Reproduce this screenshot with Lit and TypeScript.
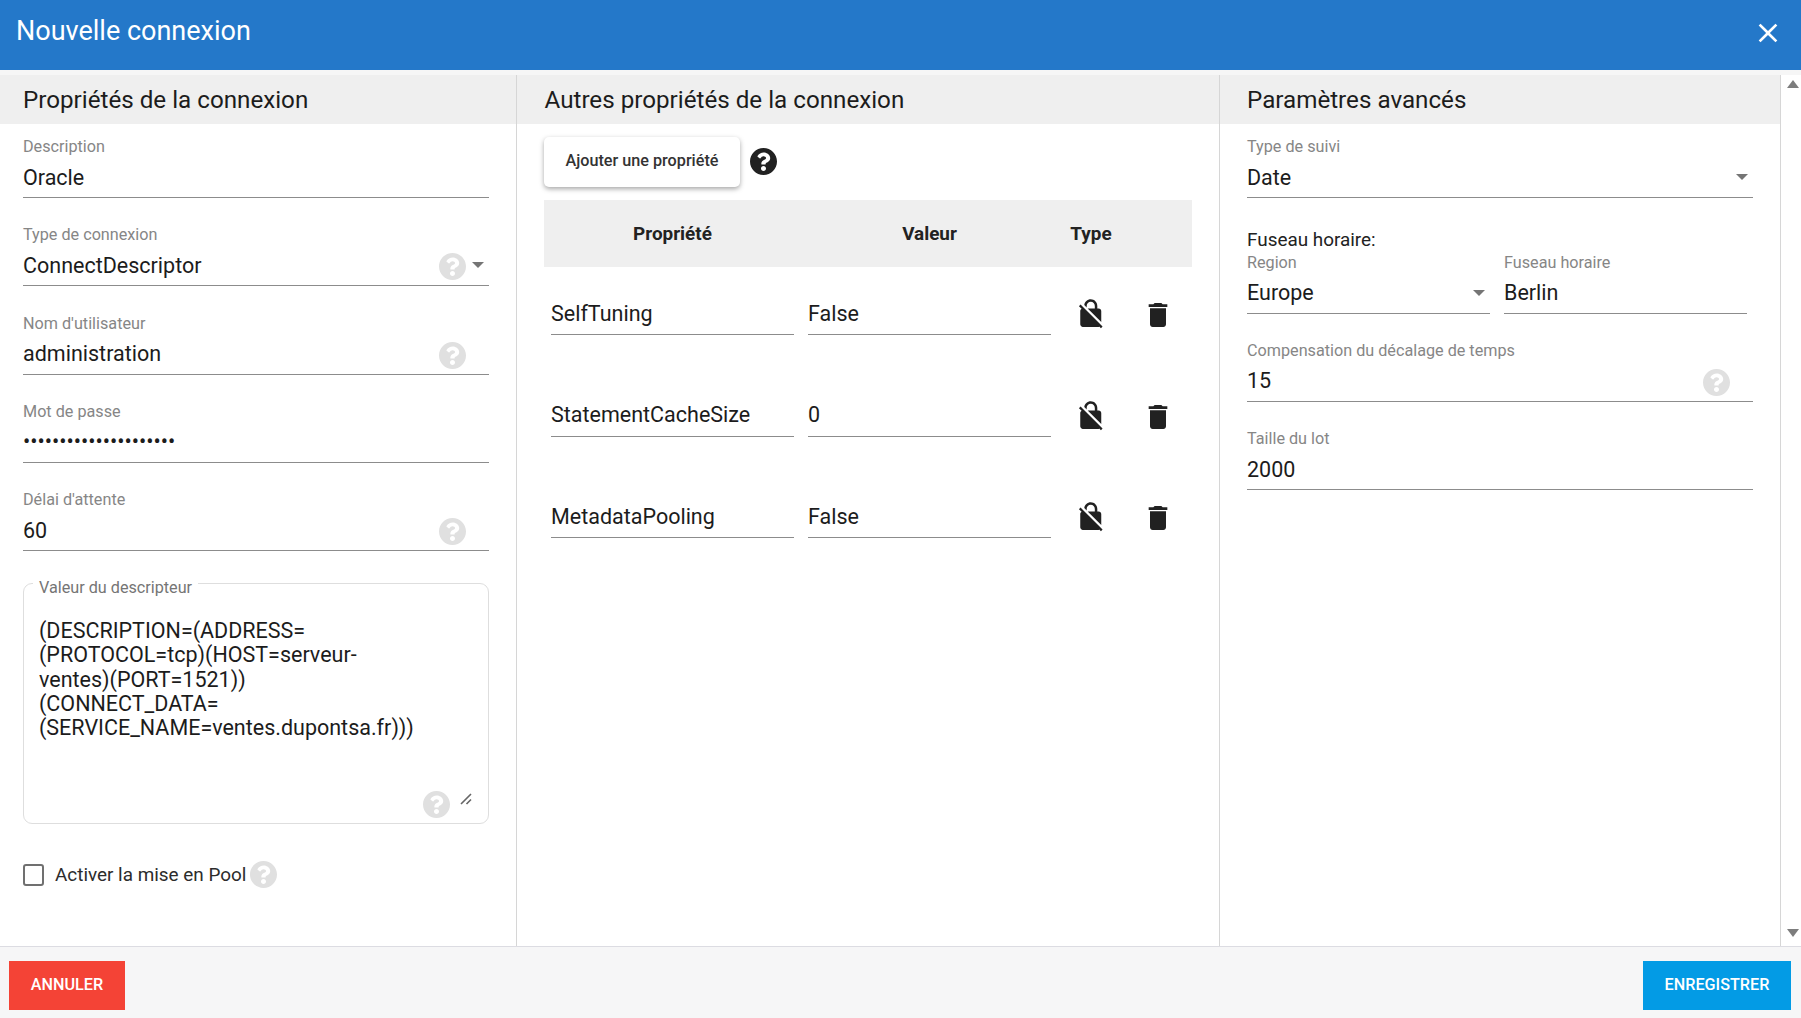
import { LitElement, html, css, svg, nothing } from 'lit';
import { customElement } from 'lit/decorators.js';

interface FieldOpts {
  help?: boolean;
  caret?: boolean;
  type?: string;
  cls?: string;
}

interface PropRow {
  name: string;
  value: string;
}

const ROWS: PropRow[] = [
  { name: 'SelfTuning', value: 'False' },
  { name: 'StatementCacheSize', value: '0' },
  { name: 'MetadataPooling', value: 'False' },
];

const DESCRIPTOR = [
  '(DESCRIPTION=(ADDRESS=',
  '(PROTOCOL=tcp)(HOST=serveur-',
  'ventes)(PORT=1521))',
  '(CONNECT_DATA=',
  '(SERVICE_NAME=ventes.dupontsa.fr)))',
];

const HELP_PATH =
  'M504 256c0 136.997-111.043 248-248 248S8 392.997 8 256C8 119.083 119.043 8 256 8s248 111.083 248 248zM262.655 90c-54.497 0-89.255 22.957-116.549 63.758-3.536 5.286-2.353 12.415 2.715 16.258l34.699 26.31c5.205 3.947 12.621 3.008 16.665-2.122 17.864-22.658 30.113-35.797 57.303-35.797 20.429 0 45.698 13.148 45.698 32.958 0 14.976-12.363 22.667-32.534 33.976C247.128 238.528 216 254.941 216 296v4c0 6.627 5.373 12 12 12h56c6.627 0 12-5.373 12-12v-1.333c0-28.462 83.186-29.647 83.186-106.667 0-58.002-60.165-102-116.531-102zM256 338c-25.365 0-46 20.635-46 46 0 25.364 20.635 46 46 46s46-20.636 46-46c0-25.365-20.635-46-46-46z';

const helpIcon = (cls = 'help') => html`<svg class=${cls} viewBox="8 8 496 496" aria-hidden="true">
  ${svg`<path d=${HELP_PATH}></path>`}
</svg>`;

const caretIcon = () => html`<svg class="caret" viewBox="0 0 12 6" aria-hidden="true"><polygon points="0,0 12,0 6,6"></polygon></svg>`;

const field = (label: string, value: string, opts: FieldOpts = {}) => html`
  <div class="field ${opts.cls ?? ''}">
    <div class="field__label">${label}</div>
    <div class="field__body">
      <input class="field__input" type=${opts.type ?? 'text'} .value=${value} />
      ${opts.help ? helpIcon() : nothing}
      ${opts.help || opts.caret ? html`<span class="caret-slot">${opts.caret ? caretIcon() : nothing}</span>` : nothing}
    </div>
  </div>
`;

@customElement('app-root')
export class AppRoot extends LitElement {
  static styles = css`
    :host {
      display: flex;
      flex-direction: column;
      height: 100vh;
      overflow: hidden;
      background: #fff;
      color: #1c1c1c;
      font-family: Roboto, 'Liberation Sans', sans-serif;
    }
    .topbar {
      flex: none;
      height: 70px;
      box-sizing: border-box;
      display: flex;
      justify-content: space-between;
      align-items: flex-start;
      padding: 0 17px 0 16px;
      background: #2478c9;
      color: #fff;
    }
    .topbar__title {
      font-size: 27px;
      line-height: 62px;
    }
    .topbar__close {
      width: 32px;
      height: 32px;
      margin-top: 17px;
      fill: #fff;
    }
    .strip {
      flex: none;
      height: 5px;
      background: #f6f6f6;
    }
    .main {
      flex: 1;
      min-height: 0;
      display: flex;
    }
    .col {
      box-sizing: border-box;
      border-right: 1px solid #d6d6d6;
    }
    .col--left {
      width: 517px;
    }
    .col--mid {
      width: 703px;
    }
    .col--right {
      width: 561px;
    }
    .col__head {
      height: 49px;
      box-sizing: border-box;
      padding-top: 1px;
      background: #efefef;
      font-size: 24.2px;
      line-height: 49px;
    }
    .col--left .col__head {
      padding-left: 23px;
    }
    .col--mid .col__head {
      padding-left: 27.5px;
    }
    .col--right .col__head {
      padding-left: 27px;
    }
    .col__body {
      padding: 13px 27px 0;
    }
    .col--left .col__body {
      padding-left: 23px;
    }
    .field {
      margin-bottom: 27.25px;
    }
    .field__label {
      height: 20px;
      font-size: 16.2px;
      line-height: 20px;
      color: #868686;
      white-space: nowrap;
    }
    .field__body {
      height: 40px;
      display: flex;
      align-items: center;
      border-bottom: 1px solid #8c8c8c;
    }
    .field__input {
      flex: 1;
      min-width: 0;
      height: 100%;
      padding: 0;
      border: 0;
      outline: 0;
      background: transparent;
      color: #1c1c1c;
      font: inherit;
      font-size: 21.5px;
    }
    .help {
      flex: none;
      width: 27px;
      height: 27px;
      fill: #e0e0e0;
      margin-top: 3px;
    }
    .caret-slot {
      flex: none;
      width: 23px;
      display: flex;
      justify-content: flex-end;
      padding-right: 5px;
      box-sizing: border-box;
    }
    .caret {
      display: block;
      width: 12px;
      height: 6px;
      fill: #757575;
    }
    .outlined {
      position: relative;
      box-sizing: border-box;
      height: 241px;
      margin-top: 32px;
      padding: 35px 14px 0 15px;
      border: 1.5px solid #dedede;
      border-radius: 9px;
      font-size: 21.5px;
      line-height: 24.3px;
    }
    .outlined__legend {
      position: absolute;
      top: -6px;
      left: 9px;
      padding: 0 6px;
      background: #fff;
      font-size: 16.2px;
      line-height: 20px;
      color: #757575;
      white-space: nowrap;
    }
    .outlined .help {
      position: absolute;
      right: 38px;
      bottom: 5px;
      margin: 0;
    }
    .outlined__grip {
      position: absolute;
      right: 16px;
      bottom: 18px;
      width: 12px;
      height: 12px;
      stroke: #666;
      stroke-width: 1.6;
      fill: none;
    }
    .pool {
      display: flex;
      align-items: center;
      margin-top: 37px;
      font-size: 18.9px;
      color: #2c2c2c;
    }
    .pool__box {
      flex: none;
      width: 21px;
      height: 22px;
      box-sizing: border-box;
      border: 2.4px solid #707070;
      border-radius: 3px;
      margin-right: 11px;
    }
    .pool .help {
      margin: 0 0 0 4px;
    }
    .add-row {
      display: flex;
      align-items: center;
      gap: 10px;
    }
    .add-btn {
      width: 196px;
      height: 50px;
      padding: 0 0 3px;
      border: 0;
      border-radius: 5px;
      background: #fff;
      box-shadow: 0 2px 5px rgba(0, 0, 0, 0.35);
      color: #333;
      font: inherit;
      font-size: 16.2px;
      font-weight: 500;
    }
    .add-row .help {
      fill: #212121;
      margin: -1px 0 0;
    }
    .props {
      display: grid;
      grid-template-columns: 257px 257px 66px 68px;
      margin-top: 13px;
    }
    .props__head {
      height: 67px;
      background: #efefef;
      font-size: 18.9px;
      font-weight: 700;
      line-height: 67px;
      text-align: center;
      color: #222;
    }
    .props__cell {
      height: 101.6px;
      box-sizing: border-box;
      padding: 25px 7px 0;
    }
    .props__input {
      display: block;
      box-sizing: border-box;
      width: 100%;
      height: 43px;
      padding: 0;
      border: 0;
      border-bottom: 1px solid #8c8c8c;
      outline: 0;
      background: transparent;
      color: #1c1c1c;
      font: inherit;
      font-size: 21.5px;
    }
    .props__icon {
      height: 101.6px;
      box-sizing: border-box;
      padding-top: 32px;
      display: flex;
      justify-content: center;
      align-items: flex-start;
    }
    .props__icon svg {
      display: block;
      fill: #212121;
    }
    .icon-lock {
      width: 31.5px;
      height: 31.5px;
      margin-top: -1px;
    }
    .icon-trash {
      width: 32px;
      height: 32px;
    }
    .zone__title {
      font-size: 18.9px;
      line-height: 22px;
      color: #222;
      margin: 30.5px 0 2px;
    }
    .zone__row {
      display: grid;
      grid-template-columns: 243px 243px;
      column-gap: 14px;
    }
    .scrollbar {
      flex: 1;
      display: flex;
      flex-direction: column;
      justify-content: space-between;
      align-items: center;
      padding: 5px 0 9px 3px;
    }
    .scrollbar svg {
      display: block;
      width: 12px;
      height: 8px;
      fill: #7d7d7d;
    }
    .footer {
      flex: none;
      height: 72px;
      box-sizing: border-box;
      display: flex;
      justify-content: space-between;
      padding: 14px 10px 0 9px;
      border-top: 1px solid #dcdce2;
      background: #f6f6f7;
    }
    .footer__btn {
      height: 49px;
      padding: 0 0 2px;
      border: 0;
      color: #fff;
      font: inherit;
      font-size: 16.2px;
      font-weight: 500;
    }
    .footer__btn--cancel {
      width: 116px;
      background: #f44336;
    }
    .footer__btn--save {
      width: 148px;
      background: #039be5;
    }
  `;

  private renderRow(row: PropRow) {
    return html`
      <div class="props__cell"><input class="props__input" .value=${row.name} /></div>
      <div class="props__cell"><input class="props__input" .value=${row.value} /></div>
      <div class="props__icon">
        <svg class="icon-lock" viewBox="0 0 24 24" aria-hidden="true">
          <path d="M21 21.78L4.22 5 3 6.22l2.04 2.04C4.42 8.6 4 9.25 4 10v10c0 1.1.9 2 2 2h12c.23 0 .45-.05.66-.12L19.78 23 21 21.78zM8.9 6c0-1.71 1.39-3.1 3.1-3.1s3.1 1.39 3.1 3.1v2H9.66L20 18.34V10c0-1.1-.9-2-2-2h-1V6c0-2.76-2.24-5-5-5-2.56 0-4.64 1.93-4.94 4.4L8.9 7.24V6z"></path>
        </svg>
      </div>
      <div class="props__icon">
        <svg class="icon-trash" viewBox="0 0 24 24" aria-hidden="true">
          <path d="M6 19c0 1.1.9 2 2 2h8c1.1 0 2-.9 2-2V7H6v12zM19 4h-3.5l-1-1h-5l-1 1H5v2h14V4z"></path>
        </svg>
      </div>
    `;
  }

  render() {
    return html`
      <div class="topbar">
        <div class="topbar__title">Nouvelle connexion</div>
        <svg class="topbar__close" viewBox="0 0 24 24" aria-hidden="true">
          <path d="M19 6.41L17.59 5 12 10.59 6.41 5 5 6.41 10.59 12 5 17.59 6.41 19 12 13.41 17.59 19 19 17.59 13.41 12z"></path>
        </svg>
      </div>
      <div class="strip"></div>
      <div class="main">
        <section class="col col--left">
          <div class="col__head">Propriétés de la connexion</div>
          <div class="col__body">
            ${field('Description', 'Oracle')}
            ${field('Type de connexion', 'ConnectDescriptor', { help: true, caret: true })}
            ${field("Nom d'utilisateur", 'administration', { help: true })}
            ${field('Mot de passe', 'motdepasse-oracle-202', { type: 'password' })}
            ${field("Délai d'attente", '60', { help: true })}
            <div class="outlined">
              <div class="outlined__legend">Valeur du descripteur</div>
              ${DESCRIPTOR.map((line) => html`<div>${line}</div>`)}
              ${helpIcon()}
              <svg class="outlined__grip" viewBox="0 0 12 12" aria-hidden="true">
                <path d="M1 11L11 1M6.5 11L11 6.5"></path>
              </svg>
            </div>
            <div class="pool">
              <span class="pool__box"></span>
              <span>Activer la mise en Pool</span>
              ${helpIcon()}
            </div>
          </div>
        </section>
        <section class="col col--mid">
          <div class="col__head">Autres propriétés de la connexion</div>
          <div class="col__body">
            <div class="add-row">
              <button class="add-btn">Ajouter une propriété</button>
              ${helpIcon()}
            </div>
            <div class="props">
              <div class="props__head">Propriété</div>
              <div class="props__head">Valeur</div>
              <div class="props__head">Type</div>
              <div class="props__head"></div>
              ${ROWS.map((r) => this.renderRow(r))}
            </div>
          </div>
        </section>
        <section class="col col--right">
          <div class="col__head">Paramètres avancés</div>
          <div class="col__body">
            ${field('Type de suivi', 'Date', { caret: true })}
            <div class="zone__title">Fuseau horaire:</div>
            <div class="zone__row">
              ${field('Region', 'Europe', { caret: true })}
              ${field('Fuseau horaire', 'Berlin')}
            </div>
            ${field('Compensation du décalage de temps', '15', { help: true })}
            ${field('Taille du lot', '2000')}
          </div>
        </section>
        <div class="scrollbar">
          <svg viewBox="0 0 12 8" aria-hidden="true"><polygon points="6,0 12,8 0,8"></polygon></svg>
          <svg viewBox="0 0 12 8" aria-hidden="true"><polygon points="0,0 12,0 6,8"></polygon></svg>
        </div>
      </div>
      <div class="footer">
        <button class="footer__btn footer__btn--cancel">ANNULER</button>
        <button class="footer__btn footer__btn--save">ENREGISTRER</button>
      </div>
    `;
  }
}
